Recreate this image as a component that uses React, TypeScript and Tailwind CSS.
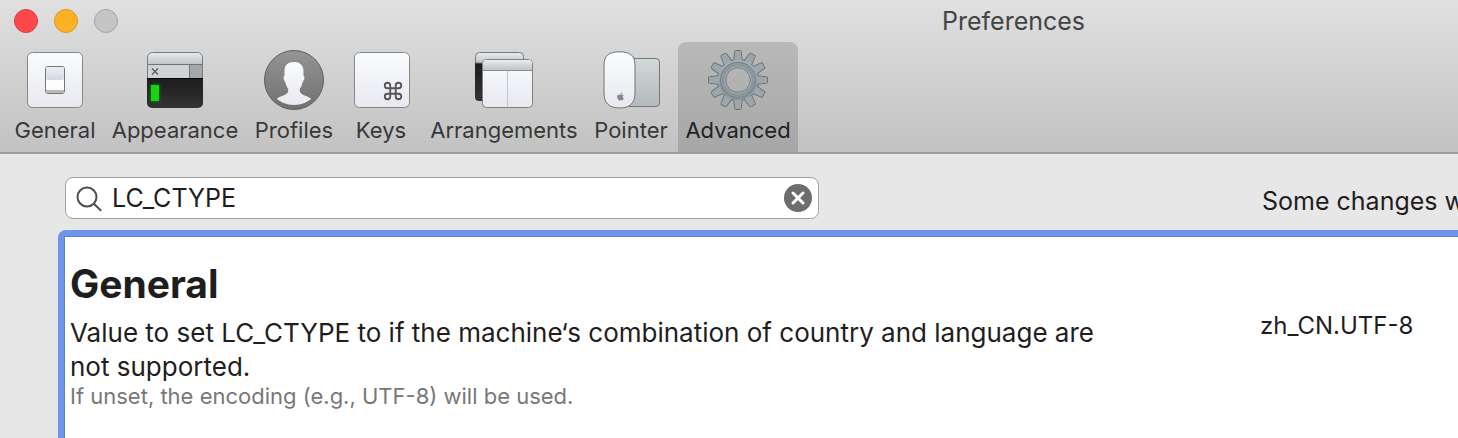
import { useState } from "react";
import type { ReactNode } from "react";
import { Command } from "lucide-react";
import { FaApple } from "react-icons/fa";

const teeth = [0, 30, 60, 90, 120, 150, 180, 210, 240, 270, 300, 330];

function GeneralIcon() {
  return (
    <svg width="60" height="60" viewBox="0 0 60 60" aria-hidden="true">
      <defs>
        <linearGradient id="plate" x1="0" y1="0" x2="0" y2="1">
          <stop offset="0" stopColor="#f9fcff" />
          <stop offset="1" stopColor="#e8e8ee" />
        </linearGradient>
        <linearGradient id="rocker" x1="0" y1="0" x2="0" y2="1">
          <stop offset="0" stopColor="#eef0f4" />
          <stop offset="1" stopColor="#d3d7df" />
        </linearGradient>
      </defs>
      <rect x="2.5" y="2.5" width="55" height="55" rx="5" fill="url(#plate)" stroke="#86868a" />
      <rect x="20.5" y="16.5" width="19" height="27" rx="2.5" fill="#fdfdfe" stroke="#77777b" />
      <rect x="21" y="17" width="18" height="13" rx="2" fill="url(#rocker)" />
      <path d="M21 40h18v1.5q0 1.5-1.5 1.5h-15q-1.5 0-1.5-1.5z" fill="#b9b9b9" />
    </svg>
  );
}

function AppearanceIcon() {
  return (
    <svg width="60" height="60" viewBox="0 0 60 60" aria-hidden="true">
      <defs>
        <linearGradient id="bar" x1="0" y1="0" x2="0" y2="1">
          <stop offset="0" stopColor="#e9ecee" />
          <stop offset="1" stopColor="#bfc3c5" />
        </linearGradient>
        <linearGradient id="screen" x1="0" y1="0" x2="0" y2="1">
          <stop offset="0" stopColor="#1d1d1d" />
          <stop offset="1" stopColor="#333333" />
        </linearGradient>
        <clipPath id="term">
          <rect x="2" y="2" width="56" height="56" rx="5" />
        </clipPath>
        <filter id="glow" x="-50%" y="-30%" width="200%" height="160%">
          <feGaussianBlur stdDeviation="1.2" />
        </filter>
      </defs>
      <g clipPath="url(#term)">
        <rect x="2" y="2" width="56" height="13" fill="url(#bar)" />
        <rect x="2" y="14" width="42" height="14" fill="#ced3d5" />
        <rect x="44" y="14" width="14" height="14" fill="#a3a8ac" />
        <path d="M2 14.5h56M44.5 14v14" stroke="#6f7275" />
        <rect x="2" y="28" width="56" height="30" fill="url(#screen)" />
        <path d="M2 28.5h56" stroke="#050505" />
      </g>
      <path d="M7 18.500l6 6M13 18.500l-6 6" stroke="#55595c" strokeWidth="1.2" />
      <rect x="5.5" y="34.5" width="9" height="17" fill="#0b8f08" filter="url(#glow)" />
      <rect x="6" y="35" width="8" height="16" fill="#1bd310" />
      <path d="M2.5 28V7.5a5 5 0 0 1 5-5h45a5 5 0 0 1 5 5V28" fill="none" stroke="#77797b" />
    </svg>
  );
}

function ProfilesIcon() {
  return (
    <svg width="60" height="60" viewBox="0 0 60 60" aria-hidden="true">
      <defs>
        <linearGradient id="disc" x1="0" y1="0" x2="0" y2="1">
          <stop offset="0" stopColor="#949494" />
          <stop offset="1" stopColor="#717171" />
        </linearGradient>
        <clipPath id="inner">
          <circle cx="30" cy="27.500" r="27.500" />
        </clipPath>
      </defs>
      <circle cx="30" cy="30" r="29.5" fill="url(#disc)" stroke="#5e5e5e" />
      <path
        clipPath="url(#inner)"
        fill="url(#plate)"
        d="M30 12c5-.5 9.5 3 9.5 9v5c1.600-.4 1 4.500-.9 6-.5 3-1.400 5-2.800 6.800-.4 2.800.4 4.700 3.700 6.200 5 2 8 3 8.500 5.500L40 57H20l-8-6.500c.5-2.500 3.500-3.500 8.500-5.500 3.300-1.500 4-3.400 3.700-6.200-1.400-1.800-2.400-3.800-2.800-6.800-1.900-1.500-2.500-6.400-.9-6v-5c0-6 3.500-9 9.500-9z"
      />
    </svg>
  );
}

function KeysIcon() {
  return (
    <svg width="60" height="60" viewBox="0 0 60 60" aria-hidden="true">
      <rect x="3.5" y="2.5" width="55" height="55" rx="5" fill="url(#plate)" stroke="#86868a" />
      <Command x={31} y={30} size={22} strokeWidth={2} color="#55555a" />
    </svg>
  );
}

function ArrangementsIcon() {
  return (
    <svg width="60" height="60" viewBox="0 0 60 60" aria-hidden="true">
      <path d="M1 13h10v38H5a4 4 0 0 1-4-4z" fill="url(#screen)" />
      <path d="M1.5 13V6.500a4 4 0 0 1 4-4h40a4 4 0 0 1 4 4V13z" fill="url(#bar)" stroke="#77797b" />
      <rect x="8.5" y="9.5" width="50" height="48" rx="4" fill="url(#plate)" stroke="#808084" />
      <path d="M9 20v-6.500a3.500 3.500 0 0 1 3.500-3.500h42a3.500 3.500 0 0 1 3.500 3.500V20z" fill="url(#bar)" />
      <path d="M9 20.500h49" stroke="#8a8c8e" />
      <path d="M33.500 21v36" stroke="#c3c6ca" />
    </svg>
  );
}

function PointerIcon() {
  return (
    <svg width="60" height="60" viewBox="0 0 60 60" aria-hidden="true">
      <defs>
        <linearGradient id="pad" x1="0" y1="0" x2="0" y2="1">
          <stop offset="0" stopColor="#d3d8da" />
          <stop offset="1" stopColor="#b3babc" />
        </linearGradient>
      </defs>
      <rect x="20.5" y="8.5" width="38" height="48" rx="3.5" fill="url(#pad)" stroke="#747779" />
      <path
        d="M18.500 1.800c11 0 15.500 4.200 15.500 13.200v28c0 10-5 15-15.500 15s-15.500-5-15.500-15V15C3 6 7.500 1.800 18.500 1.800z"
        fill="url(#plate)"
        stroke="#727275"
      />
      <FaApple x={15} y={42} size={9} color="#85858a" />
    </svg>
  );
}

function AdvancedIcon() {
  return (
    <svg width="60" height="60" viewBox="0 0 60 60" aria-hidden="true">
      <defs>
        <linearGradient id="steel" gradientUnits="userSpaceOnUse" x1="0" y1="0" x2="0" y2="60">
          <stop offset="0" stopColor="#aebbbf" />
          <stop offset="1" stopColor="#838c8e" />
        </linearGradient>
        <mask id="hole">
          <rect width="60" height="60" fill="#fff" />
          <circle cx="30" cy="30" r="12.500" fill="#000" />
        </mask>
      </defs>
      <g mask="url(#hole)">
        <g stroke="#667074" strokeWidth="1" strokeLinejoin="round">
          {teeth.map((deg) => (
            <path
              key={deg}
              d="M25.500 12l1.300-10.500q.1-1 1-1h4.400q.9 0 1 1l1.300 10.500z"
              fill="#98a4a8"
              transform={`rotate(${deg} 30 30)`}
            />
          ))}
          <circle cx="30" cy="30" r="20.500" fill="#98a4a8" />
        </g>
        {teeth.map((deg) => (
          <path
            key={deg}
            d="M26 13l1.300-11.500q.1-.5.600-.5h4.200q.5 0 .6.500l1.300 11.500z"
            fill="#9ba7aa"
            transform={`rotate(${deg} 30 30)`}
          />
        ))}
        <circle cx="30" cy="30" r="20" fill="url(#steel)" />
      </g>
      <circle cx="30" cy="30" r="17.500" fill="none" stroke="#76838a" strokeWidth="1.3" />
      <circle cx="30" cy="30" r="15" fill="none" stroke="#8a979c" strokeWidth="3.6" />
      <circle cx="30" cy="30" r="13.200" fill="none" stroke="#a6b2b6" strokeWidth="1" />
      <circle cx="30" cy="30" r="12.300" fill="none" stroke="#687276" strokeWidth="0.800" />
    </svg>
  );
}

const tabs: { name: string; box: string; icon: ReactNode }[] = [
  { name: "General", box: "w-[98px]", icon: <GeneralIcon /> },
  { name: "Appearance", box: "w-[142px]", icon: <AppearanceIcon /> },
  { name: "Profiles", box: "w-24", icon: <ProfilesIcon /> },
  { name: "Keys", box: "w-[78px]", icon: <KeysIcon /> },
  { name: "Arrangements", box: "w-[168px]", icon: <ArrangementsIcon /> },
  { name: "Pointer", box: "w-[90px] pr-1", icon: <PointerIcon /> },
  { name: "Advanced", box: "w-[120px]", icon: <AdvancedIcon /> },
];

export default function App() {
  const [active, setActive] = useState("Advanced");
  const [query, setQuery] = useState("LC_CTYPE");

  return (
    <div className="flex min-h-screen flex-col overflow-hidden bg-[#e7e7e7] font-['Inter',sans-serif] text-[#1e1e1e]">
      <header className="border-b-2 border-[#9b9b9b] bg-linear-to-b from-[#e0e0e0] to-[#c2c2c2]">
        {/* Title bar */}
        <div className="flex h-[42px] items-center justify-between pl-[14px]">
          <div className="flex gap-4">
            <button aria-label="Close" className="size-6 rounded-full border border-[#dc3b3d] bg-[#fc4a4c]" />
            <button aria-label="Minimize" className="size-6 rounded-full border border-[#d9962a] bg-[#fdb124]" />
            <button aria-label="Zoom" className="size-6 rounded-full border border-[#a5a5a5] bg-[#c5c5c5]" />
          </div>
          <h1 className="w-[516px] text-[25px] leading-8 text-[#444444]">Preferences</h1>
        </div>

        {/* Toolbar */}
        <nav className="flex pl-[6px]">
          {tabs.map((tab) => (
            <button
              key={tab.name}
              onClick={() => setActive(tab.name)}
              className={`flex shrink-0 flex-col items-center gap-1 rounded-t-lg pt-2 pb-1.5 text-[22px] leading-8 whitespace-nowrap ${tab.box} ${
                active === tab.name ? "bg-black/14 text-[#222222]" : "text-[#383838]"
              }`}
            >
              {tab.icon}
              <span>{tab.name}</span>
            </button>
          ))}
        </nav>
      </header>

      <main className="flex grow flex-col gap-[11px] pt-[23px]">
        <div className="flex items-center justify-between pl-[65px]">
          <div className="flex h-[42px] w-[754px] items-center gap-2 rounded-lg border border-[#a0a0a0] bg-white pr-1.5 pl-[10px]">
            <svg width="28" height="28" viewBox="0 0 28 28" fill="none" stroke="#4d4d4d" strokeWidth="2" aria-hidden="true">
              <circle cx="11" cy="13" r="9.500" />
              <path d="M17.800 19.800l7.400 7" />
            </svg>
            <input
              aria-label="Search settings"
              value={query}
              onChange={(e) => setQuery(e.target.value)}
              className="min-w-0 grow text-[25px] leading-8 outline-none"
            />
            <button aria-label="Clear search" onClick={() => setQuery("")}>
              <svg width="28" height="28" viewBox="0 0 28 28">
                <circle cx="14" cy="14" r="14" fill="#6d6d6d" />
                <path d="M9 9l10 10M19 9L9 19" stroke="#fff" strokeWidth="3" strokeLinecap="round" />
              </svg>
            </button>
          </div>
          <p className="w-[196px] overflow-hidden pt-1.5 text-[25px] leading-8 whitespace-nowrap">
            Some changes w
          </p>
        </div>

        <section className="ml-[58px] flex grow flex-col rounded-tl-lg border-t-[6px] border-l-[6px] border-[#6c95eb] bg-white">
          <div className="grow border-t border-l border-[#6481bd] pt-[21px] pl-[5px]">
            <h2 className="text-[39px] leading-[52px] font-bold">General</h2>
            <div className="flex justify-between">
              <div className="max-w-[1040px] pt-1.5">
                <p className="text-[26px] leading-[34px]">
                  Value to set LC_CTYPE to if the machine‘s combination of country and language are
                  not supported.
                </p>
                <p className="text-[22px] leading-6 text-[#777777]">
                  If unset, the encoding (e.g., UTF-8) will be used.
                </p>
              </div>
              <p className="w-[198px] text-[24px] leading-8">zh_CN.UTF-8</p>
            </div>
          </div>
        </section>
      </main>
    </div>
  );
}
